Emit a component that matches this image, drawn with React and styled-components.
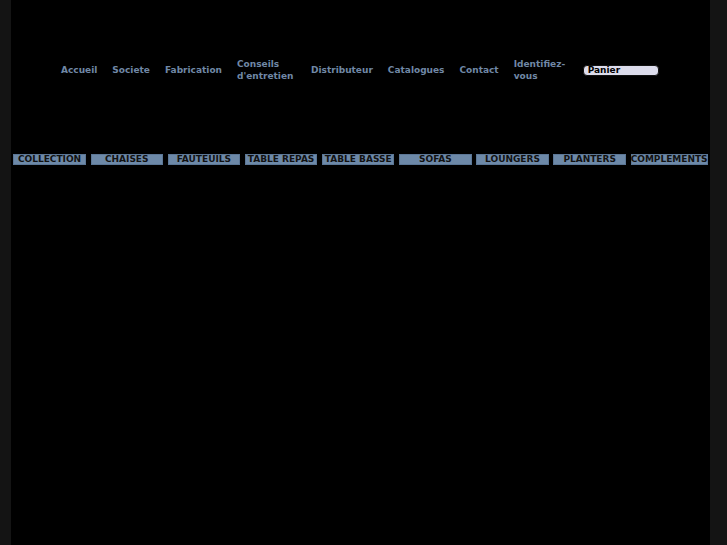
import React from "react";
import styled, { createGlobalStyle } from "styled-components";

const Global = createGlobalStyle`
  html, body { margin: 0; padding: 0; background: #141414; }
  body { font-family: "DejaVu Sans", Verdana, sans-serif; }
`;

const Page = styled.div`
  margin-left: 11px;
  width: 699px;
  min-height: 545px;
  background: #000;
  overflow: hidden;
`;

const TopNav = styled.nav`
  display: flex;
  align-items: center;
  gap: 15px;
  height: 24px;
  padding: 58px 0 0 50px;
`;

const NavLink = styled.a`
  display: block;
  width: ${(p) => (p.$w ? `${p.$w}px` : "auto")};
  color: #7088a6;
  font-size: 9px;
  font-weight: bold;
  line-height: 12px;
  text-decoration: none;
`;

const Cart = styled.div`
  box-sizing: border-box;
  width: 76px;
  height: 11px;
  margin-top: 1px;
  padding: 0 4px;
  background: #dcdcec;
  border: 1px solid #111;
  border-radius: 4px;
  color: #000;
  font-size: 9px;
  font-weight: bold;
  line-height: 9px;
`;

const Categories = styled.div`
  display: grid;
  grid-template-columns: repeat(9, 1fr);
  margin-top: 72px;
`;

const Tab = styled.a`
  display: block;
  margin: 0 2.4px;
  height: 11px;
  background: #6d89a8;
  box-shadow: inset 0 0 0 1px #5c7796;
  color: #111;
  font-size: 9px;
  font-weight: bold;
  line-height: 11px;
  text-align: center;
  white-space: nowrap;
  text-decoration: none;
`;

const links = [
  { t: "Accueil" },
  { t: "Societe" },
  { t: "Fabrication" },
  { t: "Conseils d'entretien", w: 59 },
  { t: "Distributeur" },
  { t: "Catalogues" },
  { t: "Contact" },
  { t: "Identifiez-vous", w: 54 },
];

const cats = [
  "COLLECTION",
  "CHAISES",
  "FAUTEUILS",
  "TABLE REPAS",
  "TABLE BASSE",
  "SOFAS",
  "LOUNGERS",
  "PLANTERS",
  "COMPLEMENTS",
];

export default function App() {
  return (
    <>
      <Global />
      <Page>
        <TopNav>
          {links.map((l) => (
            <NavLink key={l.t} $w={l.w} href="#">
              {l.t}
            </NavLink>
          ))}
          <Cart>Panier</Cart>
        </TopNav>
        <Categories>
          {cats.map((c) => (
            <Tab key={c} href="#">
              {c}
            </Tab>
          ))}
        </Categories>
      </Page>
    </>
  );
}
